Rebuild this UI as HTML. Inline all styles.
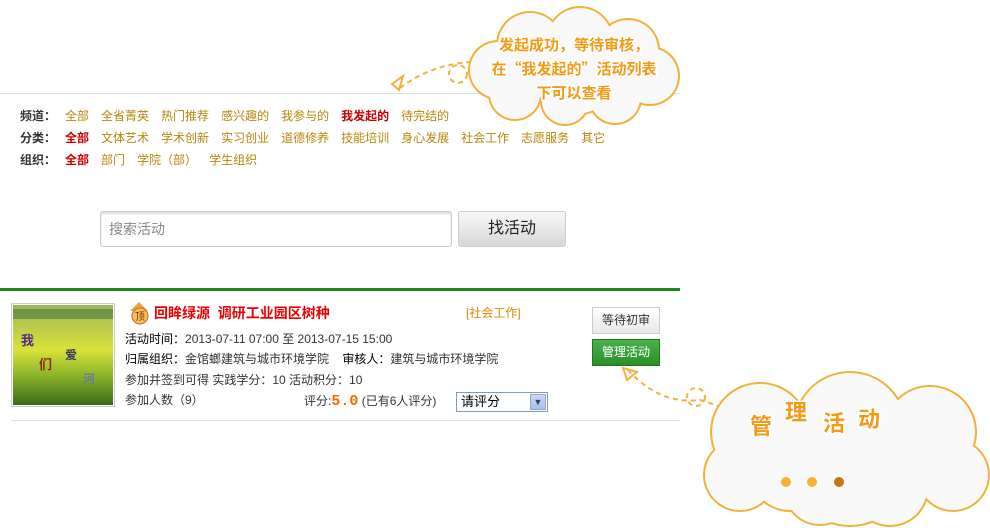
<!DOCTYPE html>
<html><head><meta charset="utf-8">
<style>
*{margin:0;padding:0;box-sizing:border-box}
body{width:990px;height:528px;background:#fff;position:relative;overflow:hidden;font-family:"Liberation Sans","Noto Sans CJK SC",sans-serif;font-size:12px;color:#333}
.a{position:absolute;white-space:nowrap}
.row{position:absolute;left:20px;font-size:12px;line-height:14px;white-space:nowrap}
.row b{color:#333;margin-right:9px}
.row span{color:#b8860b;margin-right:12px}
.row span.r{color:#c00;font-weight:bold}
.ct{font-family:"WenQuanYi Zen Hei","Noto Sans CJK SC",sans-serif;fill:#f49a17;stroke:#fff;stroke-width:3;paint-order:stroke;font-weight:bold}
</style></head><body>
<div class="a" style="left:0;top:93px;width:680px;height:1px;background:#ddd"></div>
<div class="row" style="top:109px"><b>频道：</b><span>全部</span><span>全省菁英</span><span>热门推荐</span><span>感兴趣的</span><span>我参与的</span><span class="r">我发起的</span><span>待完结的</span></div>
<div class="row" style="top:131px"><b>分类：</b><span class="r">全部</span><span>文体艺术</span><span>学术创新</span><span>实习创业</span><span>道德修养</span><span>技能培训</span><span>身心发展</span><span>社会工作</span><span>志愿服务</span><span>其它</span></div>
<div class="row" style="top:153px"><b>组织：</b><span class="r">全部</span><span>部门</span><span>学院（部）</span><span>学生组织</span></div>

<div class="a" style="left:100px;top:211px;width:352px;height:36px;border:1px solid #ccc;border-radius:3px;box-shadow:inset 0 2px 2px #ddd;color:#888;font-size:14px;line-height:34px;padding-left:8px">搜索活动</div>
<div class="a" style="left:458px;top:211px;width:108px;height:36px;border:1px solid #ccc;border-radius:3px;background:linear-gradient(#f8f8f8,#d8d8d8);font-size:16px;line-height:34px;text-align:center;color:#222">找活动</div>

<div class="a" style="left:0;top:288px;width:680px;height:3px;background:#1a8a1a"></div>

<div class="a" style="left:11px;top:303px;width:104px;height:104px;border:1px solid #ccc;padding:1px">
<svg width="100" height="100"><defs><linearGradient id="g" x1="0" y1="0" x2="0" y2="1"><stop offset="0" stop-color="#9fb55a"/><stop offset=".45" stop-color="#d8e23a"/><stop offset=".7" stop-color="#8cb52a"/><stop offset="1" stop-color="#3c6a1a"/></linearGradient></defs><rect width="100" height="100" fill="url(#g)"/><rect y="4" width="100" height="10" fill="#4a7a3a" opacity=".6"/><text x="8" y="40" fill="#5a2a8a" font-size="13" font-weight="bold">我</text><text x="26" y="64" fill="#8a2a1a" font-size="13" font-weight="bold">们</text><text x="52" y="54" fill="#3a3a5a" font-size="12" font-weight="bold">爱</text><text x="70" y="78" fill="#6a7a9a" font-size="12" font-weight="bold">河</text></svg></div>

<svg class="a" style="left:127px;top:301px" width="24" height="24"><path d="M12 1 L3 10 H7 V14 H17 V10 H21 Z" fill="#f0a040"/><circle cx="13" cy="15" r="8" fill="#f6c060" stroke="#c07020"/><text x="13" y="19" font-size="10" text-anchor="middle" fill="#803000" font-family="Noto Sans CJK SC">顶</text></svg>
<div class="a" style="left:154px;top:304px;color:#e00;font-size:14px;font-weight:bold;line-height:18px">回眸绿源&nbsp;&nbsp;调研工业园区树种</div>
<div class="a" style="left:466px;top:305px;color:#e08a00;line-height:16px">[社会工作]</div>
<div class="a" style="left:125px;top:331px;line-height:16px"><b style="font-weight:normal;color:#000">活动时间：</b>2013-07-11 07:00 至 2013-07-15 15:00</div>
<div class="a" style="left:125px;top:351px;line-height:16px;color:#000">归属组织：<span style="color:#333">金馆螂建筑与城市环境学院</span>&nbsp;&nbsp;&nbsp;&nbsp;审核人：<span style="color:#333">建筑与城市环境学院</span></div>
<div class="a" style="left:125px;top:372px;line-height:16px">参加并签到可得 实践学分：10 活动积分：10</div>
<div class="a" style="left:125px;top:392px;line-height:16px">参加人数（9）</div>
<div class="a" style="left:304px;top:393px;line-height:16px">评分:<span style="color:#f60;font-size:15px;font-weight:bold;font-family:'Liberation Mono',monospace">5.0</span> (已有6人评分)</div>
<div class="a" style="left:456px;top:392px;width:92px;height:20px;border:1px solid #7f9db9;font-size:13px;line-height:18px;padding-left:4px;color:#000">请评分<div style="position:absolute;right:1px;top:1px;width:16px;height:16px;background:linear-gradient(#c8d8f8,#a8c0f0);border:1px solid #9ab;color:#345;font-size:9px;text-align:center;line-height:14px">▼</div></div>
<div class="a" style="left:592px;top:307px;width:68px;height:27px;border:1px solid #ccc;background:linear-gradient(#fff,#e8e8e8);text-align:center;line-height:25px;color:#333">等待初审</div>
<div class="a" style="left:592px;top:339px;width:68px;height:27px;border:1px solid #1a7a1a;background:linear-gradient(#4ab04a,#2a902a);text-align:center;line-height:25px;color:#fff">管理活动</div>
<div class="a" style="left:11px;top:420px;width:669px;height:1px;background:#ddd"></div>

<svg class="a" style="left:0;top:0" width="990" height="528">
<g fill="none" stroke="#f5b03a" stroke-width="2" stroke-dasharray="5 4">
<path d="M400 88 Q430 65 470 62"/><circle cx="458" cy="74" r="9"/>
<path d="M628 370 Q660 405 700 400 Q720 405 740 420"/>
<circle cx="696" cy="397" r="9"/>
</g>
<path d="M392 84 L403 76 L399 90 Z" fill="none" stroke="#f5b03a" stroke-width="2"/>
<path d="M623 368 L637 372 L627 380 Z" fill="none" stroke="#f5b03a" stroke-width="2"/>
<g fill="#f5b03a">
<circle cx="530" cy="45" r="34"/><circle cx="580" cy="40" r="34"/><circle cx="628" cy="50" r="32"/><circle cx="650" cy="76" r="30"/><circle cx="615" cy="98" r="27"/><circle cx="565" cy="101" r="25"/><circle cx="515" cy="94" r="27"/><circle cx="498" cy="70" r="30"/><circle cx="575" cy="70" r="46"/>
<circle cx="760" cy="432" r="50"/><circle cx="850" cy="428" r="57"/><circle cx="930" cy="432" r="47"/><circle cx="953" cy="475" r="37"/><circle cx="890" cy="488" r="39"/><circle cx="820" cy="489" r="37"/><circle cx="740" cy="475" r="37"/><circle cx="850" cy="465" r="62"/><circle cx="790" cy="470" r="42"/>
</g>
<g fill="#f9f9f9">
<circle cx="530" cy="45" r="32"/><circle cx="580" cy="40" r="32"/><circle cx="628" cy="50" r="30"/><circle cx="650" cy="76" r="28"/><circle cx="615" cy="98" r="25"/><circle cx="565" cy="101" r="23"/><circle cx="515" cy="94" r="25"/><circle cx="498" cy="70" r="28"/><circle cx="575" cy="70" r="44"/>
<circle cx="760" cy="432" r="48"/><circle cx="850" cy="428" r="55"/><circle cx="930" cy="432" r="45"/><circle cx="953" cy="475" r="35"/><circle cx="890" cy="488" r="37"/><circle cx="820" cy="489" r="35"/><circle cx="740" cy="475" r="35"/><circle cx="850" cy="465" r="60"/><circle cx="790" cy="470" r="40"/>
</g>
<text class="ct" x="574" y="50" font-size="15" text-anchor="middle">发起成功，等待审核，</text>
<text class="ct" x="574" y="74" font-size="15" text-anchor="middle">在“我发起的”活动列表</text>
<text class="ct" x="574" y="98" font-size="15" text-anchor="middle">下可以查看</text>
<text class="ct" x="750" y="434" font-size="22">管</text>
<text class="ct" x="785" y="420" font-size="22">理</text>
<text class="ct" x="823" y="431" font-size="22">活</text>
<text class="ct" x="858" y="427" font-size="22">动</text>
<circle cx="786" cy="482" r="5" fill="#f5b03a"/><circle cx="812" cy="482" r="5" fill="#f5b03a"/><circle cx="839" cy="482" r="5" fill="#c07a10"/>
</svg>
</body></html>
